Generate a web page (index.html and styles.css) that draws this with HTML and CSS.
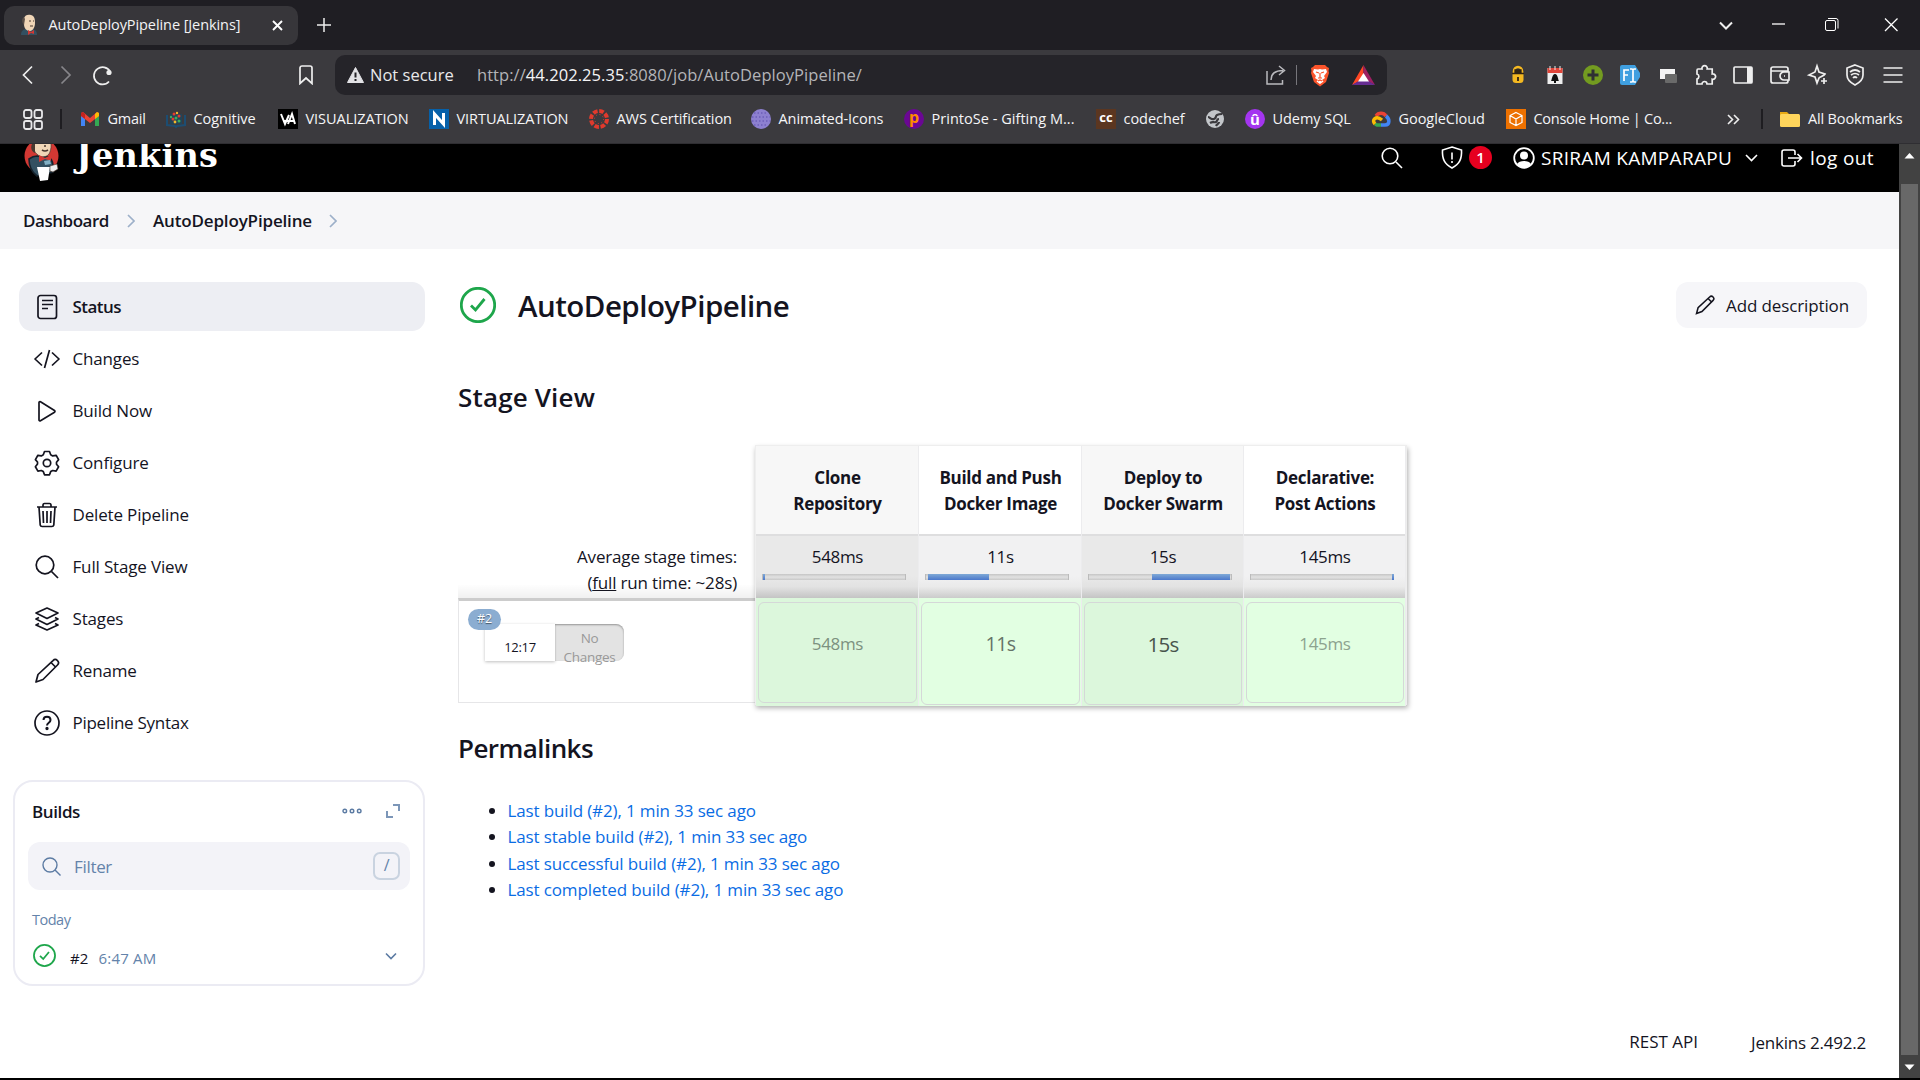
FILE: index.html
```html
<!DOCTYPE html>
<html lang="en">
<head>
<meta charset="utf-8">
<title>AutoDeployPipeline [Jenkins]</title>
<link rel="stylesheet" href="styles.css">
</head>
<body>
<div class="tabstrip">
  <div class="tab">
    <svg class="tab-icon" width="18" height="22" viewBox="0 0 18 22"><path d="M1 21c0-4 2-5 4-6l8 0c3 1 4 3 4 6z" fill="#335061"/><path d="M4 4C5 1 8 0 11 1c4 1 4 5 4 8 0 4-2 8-5 8-4 0-6-3-6-7z" fill="#f0d6b7"/><path d="M4 3C1 5 2 9 4 11l1-6z" fill="#5b5048"/><path d="M9 7h2M13 7h1M10 12h3" stroke="#49392f"/><path d="M8 16l3 2 3-2v4l-3-1-3 2z" fill="#d33833"/></svg>
    <span class="tab-title">AutoDeployPipeline [Jenkins]</span>
    <svg class="tab-close" width="11" height="11" viewBox="0 0 11 11"><path d="M1 1l9 9M10 1l-9 9" stroke="#fff" stroke-width="1.9"/></svg>
  </div>
  <svg class="tab-new" width="14" height="14" viewBox="0 0 14 14"><path d="M7 0v14M0 7h14" stroke="#eee" stroke-width="1.5"/></svg>
  <div class="window-controls">
    <svg width="58" height="50"><path d="M19 22.500l6 6 6-6" fill="none" stroke="#eee" stroke-width="2"/></svg>
    <svg width="52" height="50"><path d="M20 24h13" stroke="#fff" stroke-width="1.300"/></svg>
    <svg width="58" height="50"><rect x="21.500" y="20.500" width="10" height="10" rx="1.500" fill="none" stroke="#fff"/><path d="M24 18.500h8a2 2 0 0 1 2 2v8" fill="none" stroke="#fff"/></svg>
    <svg width="58" height="50"><path d="M23 18.500l12.500 12.500M35.500 18.500L23 31" stroke="#fff" stroke-width="1.300"/></svg>
  </div>
</div>

<div class="toolbar">
  <div class="nav">
    <svg width="37" height="30"><path d="M32 6.500L23.500 15l8.500 8.500" class="ln"/></svg>
    <svg width="38" height="30"><path d="M24.500 6.500L33 15l-8.500 8.500" class="ln dim"/></svg>
    <svg width="40" height="30"><path d="M34 21.500A8.600 8.600 0 1 1 35 11.500" class="ln"/><circle cx="34" cy="12.500" r="2.600" fill="#eee"/></svg>
  </div>
  <svg class="bookmark" width="14" height="20" viewBox="0 0 14 20"><path d="M1 3a2 2 0 0 1 2-2h8a2 2 0 0 1 2 2v15.500l-6-5.500-6 5.500z" class="ln"/></svg>
  <div class="address">
    <svg width="17" height="16" viewBox="0 0 17 16"><path d="M8.500 .5L16.500 15.500H.5z" fill="#e3e3e6" stroke="#e3e3e6" stroke-linejoin="round"/><path d="M8.500 5.500v5M8.500 12v2" stroke="#252428" stroke-width="2"/></svg>
    <span class="security">Not secure</span>
    <span class="url">http://<b>44.202.25.35</b>:8080/job/AutoDeployPipeline/</span>
    <svg class="share" width="20" height="20" viewBox="0 0 20 20"><path d="M1 6v13h15.500v-4M5 15c0-6 4-9.500 12-9.500M13 1l5.500 4.500L13 10" fill="none" stroke="#b9b9bd" stroke-width="1.500"/></svg>
    <i class="rule"></i>
    <svg class="brave" width="20" height="23" viewBox="0 0 20 23"><path d="M5 1h10l2 2 2 1-.5 3 .5 2-3 9-6 4.500L4 18 1 9l.5-2L1 4l2-1z" fill="#fb542b"/><path d="M4 5l4 .5L10 5l2 .5 4-.5 1 3-3 4 1 2-3 2 1.500 1.500L10 20l-3.500-2.500L8 16l-3-2 1-2-3-4z" fill="#fff"/><path d="M6 8l3 1M14 8l-3 1M10 9v5M8 14h4M8 17l2-1 2 1" stroke="#fb542b" stroke-width="1.200" fill="none"/></svg>
    <svg class="bat" width="23" height="20" viewBox="0 0 23 20"><path d="M11.500 0L0 20l11.500-6z" fill="#ff4724"/><path d="M11.500 0L23 20l-11.500-6z" fill="#9e1f63"/><path d="M0 20l11.500-7L23 20z" fill="#662d91"/><path d="M11.500 8L17 16.500H6z" fill="#fff"/></svg>
  </div>
  <div class="extensions">
    <svg viewBox="-12 -12 24 24"><path d="M-4-3v-1a4 4 0 0 1 8 0v1" fill="none" stroke="#f5b921" stroke-width="2.500"/><rect x="-5.500" y="-5" width="11" height="13" rx="3.500" fill="#f5b921"/><path d="M-6-1.500h12M-3-5h6v3h-6z" stroke="#302414" stroke-width="1.300" fill="#302414"/><path d="M0 2v4" stroke="#302414" stroke-width="1.800"/></svg>
    <svg viewBox="-12 -12 24 24"><path d="M-7.500-7h15V9h-15z" fill="#eee"/><path d="M-7.500-7h15v5h-15z" fill="#e0453a"/><path d="M-5-9v4M0-9v4M5-9v4" stroke="#eee"/><path d="M-4 6c1-1 1-7 4-7s3 6 4 7zM-1 6h2v2h-2z" fill="#111"/></svg>
    <svg viewBox="-12 -12 24 24"><circle r="10" fill="#739b20"/><path d="M0-5.500V5.500M-5.500 0H5.500" stroke="#2f3033" stroke-width="3"/></svg>
    <svg viewBox="-12 -12 24 24"><path d="M-8-10H5l5 8v4L5 10H-8a2 2 0 0 1-2-2V-8a2 2 0 0 1 2-2z" fill="#3f9fe0"/><path d="M-6 6V-5H-1M-6 0h4M0-6h2l1 1 1-1h2M0 7h2l1-1 1 1h2M3-5V6" stroke="#fff" stroke-width="1.700" fill="none"/></svg>
    <svg viewBox="-12 -12 24 24"><path d="M-8-6H7V4H-8z" fill="#f4f4f4"/><rect x="-3" y="-1" width="12" height="9" rx="1" fill="#6a6a6a"/></svg>
    <svg viewBox="-12 -12 24 24"><path d="M-7-6h4a2.700 2.700 0 1 1 5.200 0h5v5a2.700 2.700 0 1 1 0 5.200V9H2a2.500 2.500 0 0 0-5 0h-5V4a2.600 2.600 0 0 0 0-5v-3.500q0-1.500 1-1.500z" class="ln"/></svg>
    <svg viewBox="-12 -12 24 24"><rect x="-9" y="-8" width="18" height="16" rx="1" class="ln"/><path d="M4-8h5V8H4z" fill="#eee"/></svg>
    <svg viewBox="-12 -12 24 24"><path d="M8-3v-3a2 2 0 0 0-2-2H-7a2 2 0 0 0-2 2V6a2 2 0 0 0 2 2H6a2 2 0 0 0 2-2V5M-9-4H8M9-3H4a4 4 0 0 0 0 8h5zM4 1h1" class="ln"/></svg>
    <svg viewBox="-12 -12 24 24"><path d="M-1-9L1-3 7-1C6 1 2 2 1 3L-1 8-3 2-9 0-3-3zM6 3v6M3 6h6" class="ln"/></svg>
    <svg viewBox="-12 -12 24 24"><path d="M0-10l8 3v7c0 5-4 8-8 10-4-2-8-5-8-10v-7zM-5-3q5-4 10 0M-4 0q4-3 8 0M-2 3q2-2 4 0" class="ln"/></svg>
    <svg viewBox="-12 -12 24 24"><path d="M-9.500-7h19M-9.500 0h19M-9.500 7h19" class="ln"/></svg>
  </div>
</div>

<div class="bookmarks">
  <svg class="apps" width="20" height="21" viewBox="0 0 20 21"><g fill="none" stroke="#e8e8ea" stroke-width="1.800"><rect x="1" y="1" width="7.500" height="8" rx="2"/><rect x="11.500" y="1" width="7.500" height="8" rx="2"/><rect x="1" y="12" width="7.500" height="8" rx="2"/><rect x="11.500" y="12" width="7.500" height="8" rx="2"/></g></svg>
  <i class="sep"></i>
  <div class="bookmark-list">
    <span><svg viewBox="0 0 20 20"><path d="M1 5v12h4V9z" fill="#4285f4"/><path d="M19 5v12h-4V9z" fill="#34a853"/><path d="M1 4l2-1 7 6 7-6 2 1v3l-9 7-9-7z" fill="#ea4335"/><path d="M15 5l2-2 2 1v3l-4 3z" fill="#fbbc04"/><path d="M1 4l2-1 2 2v5L1 7z" fill="#c5221f"/></svg><em class="tight">Gmail</em></span>
    <span><svg viewBox="0 0 20 20"><path d="M1 6v10l8 1 1 1 1-1 8-1V6" fill="none" stroke="#1c4d72" stroke-width="2"/><path d="M4 5v10h12V5z" fill="#224458"/><g fill="#e23b30"><circle cx="8" cy="5" r="1.500"/><circle cx="13" cy="7" r="1.500"/><circle cx="7" cy="10" r="1.500"/></g><g fill="#3cae5d"><circle cx="10" cy="9" r="1.500"/><circle cx="13" cy="12" r="1.500"/><circle cx="5" cy="8" r="1.200"/></g><g fill="#f5b92a"><circle cx="11" cy="4" r="1.200"/><circle cx="9" cy="13" r="1.400"/></g></svg><em>Cognitive</em></span>
    <span><svg viewBox="0 0 20 20"><path d="M0 0h20v20H0z"/><path d="M3 5l4 10 4-9M10 15l4-10 3 10M5 12h11" fill="none" stroke="#fff" stroke-width="2"/></svg><em>VISUALIZATION</em></span>
    <span><svg viewBox="0 0 20 20"><path d="M0 0h20v20H0z" fill="#0660a9"/><path d="M5.500 16V5l9 10V4" fill="none" stroke="#fff" stroke-width="3"/></svg><em>VIRTUALIZATION</em></span>
    <span><svg viewBox="0 0 20 20"><circle cx="10" cy="10" r="8" fill="none" stroke="#e03a2d" stroke-width="4" stroke-dasharray="4.600 1.680"/><circle cx="10" cy="10" r="4.500" fill="none" stroke="#e03a2d" stroke-dasharray="1 2.530"/></svg><em>AWS Certification</em></span>
    <span><svg viewBox="0 0 20 20"><circle cx="10" cy="10" r="10" fill="#8d80d0"/><path d="M3 4h14M1 8h18M1 12h18M3 16h14" stroke="#6c5db8" stroke-width="1.300" stroke-dasharray="1.500 2"/></svg><em>Animated-Icons</em></span>
    <span><i class="dot printo">p</i><em class="loose">PrintoSe - Gifting M...</em></span>
    <span><i class="dot chef">cc</i><em>codechef</em></span>
    <span><svg viewBox="0 0 20 20"><circle cx="10" cy="10" r="9" fill="#c3c6ca"/><path d="M3 8c2 0 3 3 6 2s1-3 3-4 4-1 5-1M5 14c3-2 4 0 6-1s0-3 3-3M11 17c1-2 3-2 3-4" fill="none" stroke="#3b3a3e" stroke-width="2.200"/></svg></span>
    <span><i class="dot udemy">û</i><em>Udemy SQL</em></span>
    <span><svg viewBox="0 0 20 20"><path d="M5 7a6 6 0 0 1 10 0" fill="none" stroke="#ea4335" stroke-width="3.500"/><path d="M15 7c4 3 4 9-1 9h-4" fill="none" stroke="#4285f4" stroke-width="3.500"/><path d="M10 16H6l-2-1" fill="none" stroke="#34a853" stroke-width="3.500"/><path d="M4 15c-4-4 1-9 7-4" fill="none" stroke="#fbbc05" stroke-width="3.500"/></svg><em>GoogleCloud</em></span>
    <span><svg viewBox="0 0 20 20"><path d="M0 0h20v20H0z" fill="#ed7100"/><path d="M10 3.500l6 3v7l-6 3-6-3v-7zM4 6.500l6 3.500 6-3.500M10 10v6" fill="none" stroke="#fff" stroke-width="1.200"/></svg><em class="tight">Console Home | Co...</em></span>
  </div>
  <svg class="more" width="13" height="11" viewBox="0 0 13 11"><path d="M1 1l4.500 4.500L1 10M7 1l4.500 4.500L7 10" fill="none" stroke="#eee" stroke-width="1.600"/></svg>
  <i class="sep right"></i>
  <svg class="folder" width="20" height="16" viewBox="0 0 20 16"><path d="M0 1h7l2 2h10v12H0z" fill="#e8a913"/><rect x="0" y="3" width="20" height="13" rx="1.500" fill="#ffd55c"/></svg>
  <em class="tight">All Bookmarks</em>
</div>

<div class="viewport">
  <div class="page">
    <header class="header">
      <svg class="mascot" width="36" height="38" viewBox="0 0 36 38"><circle cx="17.500" cy="12" r="17" fill="#d33833"/><path d="M5 15c4-3 6-3 8-3l11 1c4 2 6 7 5 15l-16 4c-4-3-8-9-8-17z" fill="#335061" stroke="#15222c"/><path d="M9-3h17c2 4 1 9-1 13-2 3-8 4-11 1C10 8 8 3 9-3z" fill="#f0d6b7" stroke="#49392f" stroke-width=".7"/><path d="M8 0c-2 4 0 8 3 9V0z" fill="#49392f"/><path d="M20 2h2M18 6q3 2 6 0" stroke="#49392f" fill="none"/><path d="M15 11l6 3 6-3v6l-6-2-6 3z" fill="#d33833"/><path d="M20 17l6-1 1 4-6 1z" fill="#81b0c4"/><path d="M13 23h13l-2 13-8 1z" fill="#fff"/><path d="M26 22l7-2 1 5-5 3-3-1z" fill="#eee" stroke="#49392f" stroke-width=".6"/></svg>
      <span class="wordmark">Jenkins</span>
      <svg class="h-search" width="22" height="22" viewBox="0 0 22 22"><circle cx="9" cy="9" r="7.800"/><path d="M15 15l6 6"/></svg>
      <svg class="h-shield" width="22" height="23" viewBox="0 0 22 23"><path d="M11 1l9.500 3c.5 9-2 14-9.500 18C3.500 18 1 13 1.500 4zM11 6.500v7M11 15v2"/></svg>
      <span class="count">1</span>
      <svg class="h-user" width="22" height="22" viewBox="0 0 22 22"><circle cx="11" cy="11" r="9.800" stroke-width="1.800"/><circle cx="11" cy="8.500" r="4" fill="#fff" stroke="none"/><path d="M4 17c2-4 12-4 14 0-3 5-11 5-14 0z" fill="#fff" stroke="none"/></svg>
      <span class="h-name">SRIRAM KAMPARAPU</span>
      <svg class="h-chev" width="13" height="8" viewBox="0 0 13 8"><path d="M1 1l5.500 5.500L12 1"/></svg>
      <svg class="h-out" width="22" height="20" viewBox="0 0 22 20"><path d="M14 6V3a2 2 0 0 0-2-2H3a2 2 0 0 0-2 2v12a2 2 0 0 0 2 2h9a2 2 0 0 0 2-2v-3M7 9h13M16.500 5l4 4-4 4"/></svg>
      <span class="h-logout">log out</span>
    </header>
    <nav class="crumbs">
      <span class="c1">Dashboard</span>
      <svg width="8" height="14" viewBox="0 0 8 14"><path d="M1 1l6 6-6 6"/></svg>
      <span class="c2">AutoDeployPipeline</span>
      <svg width="8" height="14" viewBox="0 0 8 14"><path d="M1 1l6 6-6 6"/></svg>
    </nav>
    <div class="columns">
      <aside class="side">
        <div class="tasks">
          <a class="active"><svg viewBox="0 0 26 26"><rect x="4" y="1.500" width="18.500" height="23" rx="2.500"/><path d="M8 6.500h11M8 10.500h11M8 14.500h6"/></svg>Status</a>
          <a><svg viewBox="0 0 26 26"><path d="M8 6.500L1 13l7 6.500M18 6.500l7 6.500-7 6.500M15.500 4l-5 18"/></svg>Changes</a>
          <a><svg viewBox="0 0 26 26"><path d="M5 4.500v17.500a1 1 0 0 0 1.500.7l14-8.500a1 1 0 0 0 0-1.700L6.500 3.700A1 1 0 0 0 5 4.500z"/></svg>Build Now</a>
          <a><svg viewBox="0 0 26 26"><circle cx="13" cy="13" r="3.700"/><path d="M10.500 1.500h5l1.200 3.300 2 1.100 3.400-.6 2.500 4.300-2.100 2.600v2l2.100 2.600-2.500 4.300-3.400-.6-2 1.100-1.200 3.200h-5l-1.200-3.200-2-1.100-3.400.6-2.500-4.300L3.500 14v-2L1.400 9.600l2.500-4.300 3.400.6 2-1.100z"/></svg>Configure</a>
          <a><svg viewBox="0 0 26 26"><path d="M5 5l1.200 18a2 2 0 0 0 2 1.500h9.600a2 2 0 0 0 2-1.500L21 5M3 5h20M9 5V2.800A1.500 1.500 0 0 1 10.500 1.500h5A1.500 1.500 0 0 1 17 2.800V5M13 9v12M9 9l.5 12M17 9l-.5 12"/></svg>Delete Pipeline</a>
          <a><svg viewBox="0 0 26 26"><circle cx="11" cy="11" r="8.800"/><path d="M17.500 17.500l6.500 6.500"/></svg>Full Stage View</a>
          <a><svg viewBox="0 0 26 26"><path d="M13 2l11 5-11 5.500L2 7zM5 11.500l-3 1.500 11 5.500L24 13l-3-1.500M5 17.500L2 19l11 5 11-5-3-1.500"/></svg>Stages</a>
          <a><svg viewBox="0 0 26 26"><path d="M19 2.600a3 3 0 0 1 4.500 4.400L9 21.500 2 24l2-7.500zM17 4.500L21.500 9"/></svg>Rename</a>
          <a class="wide"><svg viewBox="0 0 26 26"><circle cx="13" cy="13" r="12"/><path d="M9.500 10c0-4.500 7-4.500 7 0 0 3-3.500 2.500-3.500 5.500" stroke-width="2"/><circle cx="13" cy="18.500" r=".8" fill="#14141f"/></svg>Pipeline Syntax</a>
        </div>
        <section class="builds">
          <div class="builds-head"><h2>Builds</h2>
            <svg width="20" height="8" viewBox="0 0 20 8"><circle cx="2.800" cy="4" r="1.800"/><circle cx="10" cy="4" r="1.800"/><circle cx="17.200" cy="4" r="1.800"/></svg>
            <svg class="expand" width="14" height="14" viewBox="0 0 14 14"><path d="M7 1h6v6M1 7v6h6"/></svg>
          </div>
          <div class="filter"><svg width="19" height="19" viewBox="0 0 19 19"><circle cx="8" cy="8" r="7"/><path d="M13 13l5.500 5.500"/></svg><span>Filter</span><kbd>/</kbd></div>
          <div class="day">Today</div>
          <div class="build"><svg class="ok" width="23" height="23" viewBox="0 0 36 36"><circle cx="18" cy="18" r="16.500"/><path d="M11 18.500l5 5 9-11"/></svg><span class="num">#2</span><span class="when">6:47 AM</span><svg class="down" width="12" height="8" viewBox="0 0 12 8"><path d="M1 1.500l5 5 5-5"/></svg></div>
        </section>
      </aside>

      <main class="main">
        <div class="title-row">
          <svg class="ok" width="36" height="36" viewBox="0 0 36 36"><circle cx="18" cy="18" r="16.700"/><path d="M11 18.500l4.500 4.500 9-11"/></svg>
          <h1>AutoDeployPipeline</h1>
          <button><svg width="20" height="20" viewBox="0 0 26 26"><path d="M19 2.600a3 3 0 0 1 4.500 4.400L9 21.500 2 24l2-7.500zM17 4.500L21.500 9"/></svg>Add description</button>
        </div>
        <h2 class="stage-title">Stage View</h2>
        <div class="stage">
          <div class="stage-left">
            <div class="averages">Average stage times:<br>(<u>full</u> run time: ~28s)</div>
            <div class="run">
              <div class="run-box"><span class="time">12:17</span><span class="changes">No<br>Changes</span><span class="badge">#2</span></div>
            </div>
          </div>
          <div class="matrix">
            <div class="col odd"><div class="name">Clone<br>Repository</div><div class="avg">548ms<div class="bar"><i style="margin-left:0;width:2px"></i></div></div><div class="cell"><span class="t1">548ms</span></div></div>
            <div class="col"><div class="name">Build and Push<br>Docker Image</div><div class="avg">11s<div class="bar"><i style="margin-left:2px;width:61px"></i></div></div><div class="cell tall"><span class="t2">11s</span></div></div>
            <div class="col odd"><div class="name">Deploy to<br>Docker Swarm</div><div class="avg">15s<div class="bar"><i style="margin-left:63px;width:78px"></i></div></div><div class="cell tall"><span class="t3">15s</span></div></div>
            <div class="col"><div class="name">Declarative:<br>Post Actions</div><div class="avg">145ms<div class="bar"><i style="margin-left:141px;width:2px"></i></div></div><div class="cell"><span class="t0">145ms</span></div></div>
          </div>
        </div>
        <h2 class="links-title">Permalinks</h2>
        <ul>
          <li><a>Last build (#2), 1 min 33 sec ago</a></li>
          <li><a>Last stable build (#2), 1 min 33 sec ago</a></li>
          <li><a>Last successful build (#2), 1 min 33 sec ago</a></li>
          <li><a>Last completed build (#2), 1 min 33 sec ago</a></li>
        </ul>
      </main>
    </div>
    <footer><span>REST API</span><span class="version">Jenkins 2.492.2</span></footer>
  </div>
  <div class="scrollbar">
    <svg width="21" height="40"><path d="M5.500 14.500L10.500 9l5 5.500z" fill="#fff"/></svg>
    <i></i>
    <svg width="21" height="23"><path d="M5.500 9.500L10.500 15l5-5.500z" fill="#fff"/></svg>
  </div>
</div>
</body>
</html>
```
FILE: styles.css
```css
* { box-sizing: border-box; }
body { margin: 0; width: 1920px; height: 1080px; overflow: hidden; background: #000; font-family: "Open Sans", "Noto Sans", sans-serif; font-size: 17px; color: #14141f; display: flex; flex-direction: column; }
svg { display: block; flex: none; }
span, em, a, h1, h2 { white-space: nowrap; }
em { font-style: normal; }
h1, h2 { margin: 0; }

/* Browser window */
.tabstrip { height: 50px; flex: none; background: #1f1e23; display: flex; align-items: center; }
.tab { width: 294px; height: 39px; margin: 0 0 0 4px; border-radius: 10px; background: #37363a; display: flex; align-items: center; color: #f3f3f5; font-size: 14.5px; }
.tab-icon { margin-left: 16px; width: 18px; }
.tab-title { margin-left: 10.5px; width: 192px; letter-spacing: -.08px; padding-bottom: 1px; }
.tab-close { margin-left: 31px; }
.tab-new { margin-left: 19px; }
.window-controls { display: flex; margin-left: auto; }
.window-controls svg:first-child { margin-right: -7px; }
.toolbar { height: 50px; flex: none; background: #3b3a3e; display: flex; align-items: center; }
.ln { fill: none; stroke: #eee; stroke-width: 1.7; }
.dim { stroke: #87868a; }
.nav { display: flex; width: 299px; }
.address { margin-left: 22px; width: 1052px; height: 40px; border-radius: 10px; background: #252429; display: flex; align-items: center; padding-left: 12px; font-size: 16.5px; color: #e9e9eb; }
.security { width: 107px; margin-left: 6px; padding-bottom: 2px; }
.url { width: 789px; color: #b4b4b8; letter-spacing: .06px; padding-bottom: 2px; }
.url b { font-weight: 400; color: #f4f4f6; }
.rule { width: 1px; height: 20px; background: #77767b; margin-left: 10px; }
.brave { margin-left: 13px; }
.bat { margin-left: 22px; }
.extensions { margin-left: 112px; display: grid; grid-template-columns: repeat(11, 37.5px); justify-items: center; margin-right: -20px; }
.extensions svg { width: 24px; height: 24px; }
.bookmarks { height: 44px; flex: none; background: #3b3a3e; border-bottom: 1px solid #2f2e32; display: flex; align-items: center; color: #f5f5f7; font-size: 14.5px; padding-bottom: 5px; }
.bookmarks em { padding-bottom: 1px; }
.apps { margin-left: 23px; }
.sep { width: 2px; height: 20px; margin-left: 17px; background: #1e1d21; }
.bookmark-list { margin-left: 18px; display: grid; grid-template-columns: 86px 112px 151px 160px 162px 153px 192px 109px 40px 126px 135px 221px; }
.bookmark-list > span { display: flex; align-items: center; gap: 7.5px; }
.bookmark-list svg { width: 20px; height: 20px; }
.bookmark-list em { letter-spacing: -.05px; }
.bookmark-list em.tight { letter-spacing: -.26px; }
.bookmark-list em.loose { letter-spacing: .03px; }
.dot { width: 20px; height: 20px; font-style: normal; font-weight: 700; text-align: center; line-height: 17px; border-radius: 10px; font-size: 16px; }
.printo { background: #6a0794; color: #ff8a00; }
.chef { background: #5b3620; color: #fff; border-radius: 0; font-size: 13px; }
.udemy { background: #a435f0; color: #fff; font-size: 15px; line-height: 20px; }
.sep.right { margin-left: 21px; }
.folder { margin-left: 17px; margin-right: 8px; }
.tight { letter-spacing: -.16px; }

/* Page */
.viewport { height: 934px; display: flex; }
.page { width: 1899px; background: #fff; display: flex; flex-direction: column; overflow: hidden; }
.scrollbar { width: 21px; background: #424242; display: flex; flex-direction: column; }
.scrollbar i { flex: 1; margin: 0 2px 0 2px; background: #686868; }
.header { height: 48px; flex: none; background: #000; color: #fff; display: flex; align-items: flex-start; font-size: 19px; line-height: 30px; overflow: hidden; }
.header svg { fill: none; stroke: #fff; stroke-width: 1.6; }
.header .mascot { margin-left: 24px; stroke: none; }
.wordmark { font: 700 33.5px/38px "DejaVu Serif", serif; width: 1289px; margin: -7px 0 0 16px; letter-spacing: .2px; }
.h-search { margin: 3px 0 0 16px; }
.h-shield { margin: 2px 0 0 38px; }
.count { width: 23px; height: 23px; margin: 2px 0 0 6px; border-radius: 50%; background: #e6001f; font-size: 15px; font-weight: 600; line-height: 22px; text-align: center; }
.h-user { margin: 3px 0 0 21px; }
.h-name { width: 193px; margin: -1px 0 0 6px; letter-spacing: .29px; }
.h-chev { margin: 10px 0 0 11px; }
.h-out { margin: 5px 0 0 23px; }
.h-logout { margin: -1px 0 0 7px; letter-spacing: .38px; }
.crumbs { height: 57px; flex: none; background: #f6f6f8; display: flex; align-items: center; font-weight: 600; padding-left: 23px; }
.crumbs svg { fill: none; stroke: #9db0c9; stroke-width: 1.7; }
.c1 { width: 104px; letter-spacing: -.46px; }
.c2 { margin-left: 18px; width: 176px; letter-spacing: -.16px; }
.columns { display: flex; }
.side { width: 425px; flex: none; padding: 33px 0 0 13px; }
.tasks { margin-left: 6px; display: grid; gap: 3px; }
.tasks a { height: 49px; border-radius: 13px; display: flex; align-items: center; padding-left: 15px; gap: 12.5px; letter-spacing: -.16px; }
.tasks svg { width: 26px; height: 26px; fill: none; stroke: #14141f; stroke-width: 1.7; stroke-linejoin: round; }
.tasks .active { background: #edeef3; font-weight: 600; letter-spacing: -.54px; }
.tasks .wide { letter-spacing: -.27px; }
.builds { margin-top: 33px; height: 206px; border: 2px solid #ebebf3; border-radius: 20px; padding: 0 13px; }
.builds-head { height: 60px; display: flex; align-items: center; padding: 0 0 2px 4px; }
.builds-head h2 { font-size: 17px; font-weight: 600; letter-spacing: -.39px; flex: 1; }
.builds svg { fill: none; stroke: #5c7ba3; stroke-width: 1.4; }
.builds .expand { margin: 0 10px 0 24px; stroke: #7c96b8; stroke-width: 2; }
.filter { height: 48px; border-radius: 12px; background: #f3f3f8; display: flex; align-items: center; color: #6483aa; letter-spacing: -.32px; padding: 0 10px 0 14px; }
.filter span { margin-left: 13px; flex: 1; }
.filter kbd { width: 27px; height: 28px; border: 2px solid #c9d3e0; border-radius: 7px; text-align: center; font: 16px/23px "Open Sans", sans-serif; }
.day { margin: 20px 0 0 4px; font-size: 14.5px; line-height: 20px; letter-spacing: -.5px; color: #6483aa; }
.build { display: flex; align-items: center; height: 38px; margin: 7px 0 0 5px; font-size: 15px; }
.build span { padding-top: 4px; }
.build .num { margin-left: 14px; width: 28.5px; }
.build .when { color: #6483aa; flex: 1; letter-spacing: .2px; }
.build .down { margin-right: 13px; stroke-width: 1.6; }
svg.ok, .builds svg.ok { fill: none; stroke: #1ea64b; stroke-width: 2.8; }
.build svg.ok { margin-top: -1px; }
.main { margin-left: 33px; width: 1409px; padding-top: 33px; }
.title-row { height: 46px; display: flex; align-items: center; }
.title-row .ok { margin: -1px 0 0 2px; }
h1 { font-size: 29.5px; font-weight: 600; margin: 0 auto 0 22px; letter-spacing: -.53px; }
button { width: 191px; height: 46px; border: 0; border-radius: 12px; background: #f6f6f9; font: 17px "Open Sans", sans-serif; letter-spacing: -.12px; color: #14141f; display: flex; align-items: center; gap: 11px; padding: 0 0 0 19px; white-space: nowrap; }
button svg { fill: none; stroke: #14141f; stroke-width: 2; }
.main h2 { font-size: 26px; font-weight: 600; line-height: 36px; }
.stage-title { margin-top: 51px; letter-spacing: .16px; }
.stage { margin-top: 30px; display: flex; width: 949px; }
.stage-left { width: 297px; padding-top: 60px; display: flex; flex-direction: column; }
.averages { height: 93px; padding: 39px 18px 0 0; text-align: right; line-height: 26px; letter-spacing: -.17px; background: linear-gradient(transparent 85%, rgba(0,0,0,.06)); }
.run { height: 105px; border: 1px solid #e6e6e8; border-right: 0; border-top: 3px solid #ccc; padding: 23px 0 0 26px; background: #fff; }
.run-box { position: relative; display: flex; font-size: 14px; }
.time { width: 70px; height: 37px; line-height: 46px; text-align: center; font-size: 13px; letter-spacing: -.3px; box-shadow: 0 1px 3px rgba(0,0,0,.25); }
.changes { width: 69px; height: 37px; background: #e3e3e3; color: #999; text-align: center; line-height: 19px; padding-top: 4.500px; font-size: 13.5px; letter-spacing: -.3px; border-radius: 0 8px 8px 0; box-shadow: inset 0 1px 2px rgba(0,0,0,.35); }
.badge { position: absolute; left: -17px; top: -15px; width: 33px; height: 21px; border-radius: 10.5px; background: #8badd1; color: #fff; text-align: center; font-size: 12.5px; line-height: 20px; text-shadow: 0 1px 1px #456; }
.matrix { width: 652px; height: 260px; display: grid; grid-template-columns: 163px 163px 162px 162px; border: 1px solid #eee; background: #f0f0f2; box-shadow: 1px 3px 5px rgba(0,0,0,.32); }
.col { display: flex; flex-direction: column; border-right: 1px solid #ececee; background: #e2ffe2; }
.name { height: 90px; background: #fff; border-bottom: 2px solid #dededf; font-weight: 700; letter-spacing: -.3px; line-height: 26px; text-align: center; padding: 19px 0 0 1px; }
.odd .name { background: #f7f7f7; }
.avg { height: 62px; background: linear-gradient(#f1f1f2 65%, #eaeaea 82%, #cbcbcb); text-align: center; line-height: 26px; letter-spacing: -.35px; padding: 8px 10px 0 6px; text-indent: 5px; }
.odd .avg { background: linear-gradient(#e9e9e9 65%, #e2e2e2 82%, #c4c4c4); }
.bar { width: 144px; height: 6px; margin-top: 4px; background: linear-gradient(#c5c5c5, #dedede 45%, #dedede 60%, #c8c8c8); border: solid #bbb; border-width: 0 1px; }
.bar i { display: block; height: 6px; background: linear-gradient(#7fa9d6, #4b78cc); }
.cell { margin: 4px 1px 3px 2px; height: 101px; border: 1px solid #d5d8d8; border-radius: 6px; background: #e2ffe2; display: flex; justify-content: center; padding-top: 28px; line-height: 26px; letter-spacing: -.35px; }
.cell.tall { height: 103px; margin-bottom: 1px; }
.odd, .odd .cell { background: #dcf7dc; }
.t1 { color: #7c917f; }
.t0 { color: #8da38f; }
.t2 { color: #657368; font-size: 19.5px; letter-spacing: -.6px; }
.t3 { color: #48544b; font-size: 20.5px; letter-spacing: -.7px; }
.links-title { margin-top: 25px; letter-spacing: -.56px; }
ul { margin: 32px 0 0; padding-left: 49.5px; line-height: 26.25px; letter-spacing: -.13px; }
ul a { color: #0a6ce4; }
footer { margin-top: auto; height: 69px; display: flex; align-items: center; justify-content: flex-end; padding-right: 33px; gap: 53px; padding-bottom: 5px; }
footer .version { letter-spacing: -.22px; padding-top: 2px; }
```
